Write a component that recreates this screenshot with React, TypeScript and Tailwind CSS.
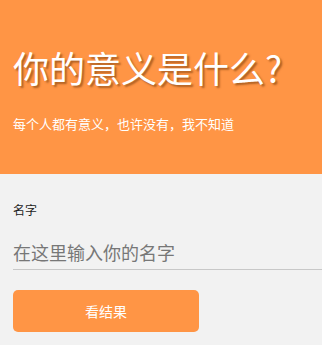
import React from 'react';

const FONT = '"Microsoft YaHei", "Noto Sans CJK SC", "Noto Sans", sans-serif';

export default function App() {
  return (
    <div className="min-h-[345px] w-[322px] bg-[#f2f2f2]" style={{ fontFamily: FONT }}>
      <header className="h-[174px] bg-[#ff9545] px-[13px] pt-[43px]">
        <h1 className="text-[36px] leading-[48px] text-white [text-shadow:2px_2px_2px_rgba(120,60,10,0.6)]">
          你的意义是什么?
        </h1>
        <p className="mt-[23px] text-[13px] leading-[20px] text-white">每个人都有意义，也许没有，我不知道</p>
      </header>

      <div className="pl-[13px] pt-[27px]">
        <label className="block text-[12px] leading-[18px] text-[#222]">名字</label>
        <input
          className="mt-[15px] block h-[36px] w-full border-b border-[#c8c8c8] bg-transparent text-[18px] text-[#555] outline-none placeholder:text-[#777]"
          placeholder="在这里输入你的名字"
        />
        <button className="mt-[20px] h-[42px] w-[186px] rounded-[5px] bg-[#ff9545] text-[14px] text-white">
          看结果
        </button>
      </div>
    </div>
  );
}
